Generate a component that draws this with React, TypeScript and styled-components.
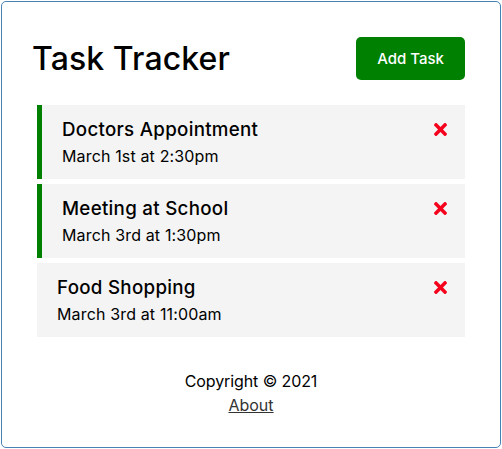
import React from 'react';
import styled, { createGlobalStyle } from 'styled-components';

const GlobalStyle = createGlobalStyle`
  * { box-sizing: border-box; margin: 0; padding: 0; }
  body {
    margin: 0;
    font-family: Inter, "Noto Sans", sans-serif;
    font-size: 16px;
    line-height: 24px;
    color: #000;
    background: #fff;
  }
`;

const Container = styled.div`
  max-width: 500px;
  margin: 1px auto;
  min-height: 300px;
  border: 1px solid steelblue;
  border-radius: 5px;
  padding: 30px;
`;

const Header = styled.header`
  display: flex;
  justify-content: space-between;
  align-items: center;
  margin-bottom: 20px;
`;

const Title = styled.h1`
  font-size: 32px;
  line-height: 48px;
  font-weight: 500;
  letter-spacing: 0.1px;
`;

const Button = styled.button`
  display: inline-block;
  background: green;
  color: #fff;
  border: none;
  padding: 10px 21px;
  margin: 5px;
  border-radius: 5px;
  cursor: pointer;
  font-family: inherit;
  font-size: 15px;
  line-height: 23px;
  font-weight: 500;
`;

const Task = styled.div<{ $reminder?: boolean }>`
  background: #f4f4f4;
  margin: 5px;
  padding: 10px 20px;
  cursor: pointer;
  border-left: ${(p) => (p.$reminder ? '5px solid green' : 'none')};
`;

const TaskTitle = styled.h3`
  display: flex;
  align-items: center;
  justify-content: space-between;
  font-size: 18.72px;
  line-height: 29px;
  font-weight: 550;
  letter-spacing: 0.3px;
`;

const TaskDay = styled.p`
  font-size: 16px;
  line-height: 25px;
  font-weight: 400;
  letter-spacing: 0.15px;
`;

const DeleteIcon = styled.svg`
  width: 13px;
  height: 13px;
  margin-right: -1.5px;
  fill: #f5021d;
  cursor: pointer;
  flex-shrink: 0;
`;

const Footer = styled.footer`
  margin-top: 32px;
  text-align: center;
  font-size: 16px;
  line-height: 24px;
`;

const FooterLink = styled.a`
  color: #333;
  text-decoration: underline;
`;

const FooterText = styled.p`
  letter-spacing: -0.1px;
`;

const tasks = [
  { id: 1, text: 'Doctors Appointment', day: 'March 1st at 2:30pm', reminder: true },
  { id: 2, text: 'Meeting at School', day: 'March 3rd at 1:30pm', reminder: true },
  { id: 3, text: 'Food Shopping', day: 'March 3rd at 11:00am', reminder: false },
];

const Times = () => (
  <DeleteIcon viewBox="0 80 352 352" aria-hidden="true">
    <path d="M242.72 256l100.07-100.07c12.28-12.28 12.28-32.19 0-44.48l-22.24-22.24c-12.28-12.28-32.19-12.28-44.48 0L176 189.28 75.930 89.21c-12.28-12.28-32.19-12.28-44.48 0L9.21 111.45c-12.28 12.28-12.28 32.19 0 44.48L109.28 256 9.21 356.07c-12.28 12.28-12.28 32.19 0 44.48l22.24 22.24c12.28 12.28 32.2 12.28 44.480 0L176 322.72l100.07 100.07c12.28 12.28 32.2 12.28 44.48 0l22.24-22.24c12.28-12.28 12.28-32.19 0-44.48L242.72 256z" />
  </DeleteIcon>
);

export default function App() {
  return (
    <>
      <GlobalStyle />
      <Container>
        <Header>
          <Title>Task Tracker</Title>
          <Button>Add Task</Button>
        </Header>
        <div>
          {tasks.map((t) => (
            <Task key={t.id} $reminder={t.reminder}>
              <TaskTitle>
                {t.text}
                <Times />
              </TaskTitle>
              <TaskDay>{t.day}</TaskDay>
            </Task>
          ))}
        </div>
        <Footer>
          <FooterText>Copyright &copy; 2021</FooterText>
          <FooterLink href="#">About</FooterLink>
        </Footer>
      </Container>
    </>
  );
}
